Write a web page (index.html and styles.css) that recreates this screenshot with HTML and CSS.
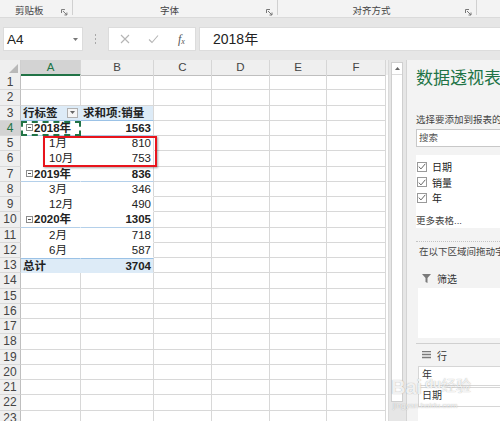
FILE: index.html
```html
<!DOCTYPE html>
<html lang="zh-CN">
<head>
<meta charset="utf-8">
<title>数据透视表</title>
<link rel="stylesheet" href="styles.css">
</head>
<body>
<div class="app">
  <div class="ribbon">
    <div class="grp g1"><span class="glabel">剪贴板</span><svg class="launch" width="7" height="7" viewBox="0 0 7 7"><path d="M0.5 4V0.5H4M2 2L6 6M6 3.5V6H3.5" fill="none" stroke="#777" stroke-width="1"/></svg></div>
    <div class="grp g2"><span class="glabel">字体</span><svg class="launch" width="7" height="7" viewBox="0 0 7 7"><path d="M0.5 4V0.5H4M2 2L6 6M6 3.5V6H3.5" fill="none" stroke="#777" stroke-width="1"/></svg></div>
    <div class="grp g3"><span class="glabel">对齐方式</span><svg class="launch" width="7" height="7" viewBox="0 0 7 7"><path d="M0.5 4V0.5H4M2 2L6 6M6 3.5V6H3.5" fill="none" stroke="#777" stroke-width="1"/></svg></div>
  </div>

  <div class="fbar">
    <div class="namebox"><span>A4</span><svg width="5" height="3" viewBox="0 0 5 3"><path d="M0 0H5L2.5 3Z" fill="#777"/></svg></div>
    <div class="dots"><i></i><i></i><i></i></div>
    <div class="fbtns">
      <svg width="10" height="10" viewBox="0 0 10 10"><path d="M1 1L9 9M9 1L1 9" stroke="#b5b5b5" stroke-width="1.1"/></svg>
      <svg width="11" height="10" viewBox="0 0 11 10"><path d="M1 5.5L4 8.5L10 1.5" fill="none" stroke="#b5b5b5" stroke-width="1.1"/></svg>
      <span class="fx">f<sub>x</sub></span>
    </div>
    <div class="finput">2018年</div>
  </div>

  <div class="main">
    <div class="sheet">
      <div class="row hdr">
        <div class="corner"><svg width="9" height="9" viewBox="0 0 9 9"><path d="M9 0V9H0Z" fill="#b9b9b9"/></svg></div>
        <div class="ch sel">A</div><div class="ch">B</div><div class="ch">C</div><div class="ch">D</div><div class="ch">E</div><div class="ch">F</div>
      </div>
      <div class="row"><div class="rh">1</div><div class="c"></div><div class="c"></div><div class="c"></div><div class="c"></div><div class="c"></div><div class="c"></div></div>
      <div class="row"><div class="rh">2</div><div class="c"></div><div class="c"></div><div class="c"></div><div class="c"></div><div class="c"></div><div class="c"></div></div>
      <div class="row"><div class="rh">3</div><div class="c pv ph pa b">行标签<span class="ddbtn"><svg width="5" height="3" viewBox="0 0 5 3"><path d="M0 0H5L2.5 3Z" fill="#666"/></svg></span></div><div class="c pv ph pb b num-l">求和项:销量</div><div class="c"></div><div class="c"></div><div class="c"></div><div class="c"></div></div>
      <div class="row"><div class="rh rsel">4</div><div class="c pv py pa b active"><span class="minus"></span>2018年</div><div class="c pv py pb b num">1563</div><div class="c"></div><div class="c"></div><div class="c"></div><div class="c"></div></div>
      <div class="row"><div class="rh">5</div><div class="c pv pa kid">1月</div><div class="c pv pb num">810</div><div class="c"></div><div class="c"></div><div class="c"></div><div class="c"></div></div>
      <div class="row"><div class="rh">6</div><div class="c pv pa kid">10月</div><div class="c pv pb num">753</div><div class="c"></div><div class="c"></div><div class="c"></div><div class="c"></div></div>
      <div class="row"><div class="rh">7</div><div class="c pv py pa b"><span class="minus"></span>2019年</div><div class="c pv py pb b num">836</div><div class="c"></div><div class="c"></div><div class="c"></div><div class="c"></div></div>
      <div class="row"><div class="rh">8</div><div class="c pv pa kid">3月</div><div class="c pv pb num">346</div><div class="c"></div><div class="c"></div><div class="c"></div><div class="c"></div></div>
      <div class="row"><div class="rh">9</div><div class="c pv pa kid">12月</div><div class="c pv pb num">490</div><div class="c"></div><div class="c"></div><div class="c"></div><div class="c"></div></div>
      <div class="row"><div class="rh">10</div><div class="c pv py pa b"><span class="minus"></span>2020年</div><div class="c pv py pb b num">1305</div><div class="c"></div><div class="c"></div><div class="c"></div><div class="c"></div></div>
      <div class="row"><div class="rh">11</div><div class="c pv pa kid">2月</div><div class="c pv pb num">718</div><div class="c"></div><div class="c"></div><div class="c"></div><div class="c"></div></div>
      <div class="row"><div class="rh">12</div><div class="c pv pa kid">6月</div><div class="c pv pb num">587</div><div class="c"></div><div class="c"></div><div class="c"></div><div class="c"></div></div>
      <div class="row"><div class="rh">13</div><div class="c pv pt pa b">总计</div><div class="c pv pt pb b num">3704</div><div class="c"></div><div class="c"></div><div class="c"></div><div class="c"></div></div>
      <div class="row"><div class="rh">14</div><div class="c"></div><div class="c"></div><div class="c"></div><div class="c"></div><div class="c"></div><div class="c"></div></div>
      <div class="row"><div class="rh">15</div><div class="c"></div><div class="c"></div><div class="c"></div><div class="c"></div><div class="c"></div><div class="c"></div></div>
      <div class="row"><div class="rh">16</div><div class="c"></div><div class="c"></div><div class="c"></div><div class="c"></div><div class="c"></div><div class="c"></div></div>
      <div class="row"><div class="rh">17</div><div class="c"></div><div class="c"></div><div class="c"></div><div class="c"></div><div class="c"></div><div class="c"></div></div>
      <div class="row"><div class="rh">18</div><div class="c"></div><div class="c"></div><div class="c"></div><div class="c"></div><div class="c"></div><div class="c"></div></div>
      <div class="row"><div class="rh">19</div><div class="c"></div><div class="c"></div><div class="c"></div><div class="c"></div><div class="c"></div><div class="c"></div></div>
      <div class="row"><div class="rh">20</div><div class="c"></div><div class="c"></div><div class="c"></div><div class="c"></div><div class="c"></div><div class="c"></div></div>
      <div class="row"><div class="rh">21</div><div class="c"></div><div class="c"></div><div class="c"></div><div class="c"></div><div class="c"></div><div class="c"></div></div>
      <div class="row"><div class="rh">22</div><div class="c"></div><div class="c"></div><div class="c"></div><div class="c"></div><div class="c"></div><div class="c"></div></div>
      <div class="row"><div class="rh">23</div><div class="c"></div><div class="c"></div><div class="c"></div><div class="c"></div><div class="c"></div><div class="c"></div></div>
      <div class="redbox"></div>
    </div>

    <div class="gutter">
      <div class="vscroll"><div class="up"><svg width="5" height="3" viewBox="0 0 5 3"><path d="M0 3H5L2.5 0Z" fill="#666"/></svg></div></div>
    </div>

    <aside class="panel">
      <div class="p-title">数据透视表字段</div>
      <div class="p-sub">选择要添加到报表的字段:</div>
      <div class="p-search">搜索</div>
      <div class="p-fields">
        <div class="fld"><span class="cb"><svg width="8" height="7" viewBox="0 0 8 7"><path d="M0.7 3.6L3 5.9L7.3 0.8" fill="none" stroke="#666" stroke-width="1"/></svg></span>日期</div>
        <div class="fld"><span class="cb"><svg width="8" height="7" viewBox="0 0 8 7"><path d="M0.7 3.6L3 5.9L7.3 0.8" fill="none" stroke="#666" stroke-width="1"/></svg></span>销量</div>
        <div class="fld"><span class="cb"><svg width="8" height="7" viewBox="0 0 8 7"><path d="M0.7 3.6L3 5.9L7.3 0.8" fill="none" stroke="#666" stroke-width="1"/></svg></span>年</div>
        <div class="more">更多表格...</div>
      </div>
      <div class="p-dotted"></div>
      <div class="p-hint">在以下区域间拖动字段:</div>
      <div class="area-h"><svg width="9" height="9" viewBox="0 0 9 9"><path d="M0 0H9L5.5 4V9L3.5 8V4Z" fill="#7a7a7a"/></svg><span>筛选</span></div>
      <div class="area-box"></div>
      <div class="p-line"></div>
      <div class="area-h"><svg width="9" height="8" viewBox="0 0 9 8"><path d="M0 0.5H9M0 3.5H9M0 6.5H9" stroke="#7a7a7a" stroke-width="1.4"/></svg><span>行</span></div>
      <div class="area-box items"><div class="item">年</div><div class="item">日期</div></div>
    </aside>
  </div>

  <div class="watermark"><span class="wm-bai">Bai</span><span class="wm-paw">du</span><span class="wm-jy">经验</span><span class="wm-url">jingyan.baidu.com</span></div>
</div>
</body>
</html>
```

FILE: styles.css
```css
html, body {
  margin: 0;
  padding: 0;
}
body {
  width: 500px;
  height: 421px;
  overflow: hidden;
  background: #e6e6e6;
  font-family: "Liberation Sans", "Noto Sans CJK SC", sans-serif;
  color: #222;
}
.app {
  position: relative;
  width: 500px;
  height: 421px;
  overflow: hidden;
}

/* ribbon */
.ribbon {
  height: 18px;
  background: #f3f3f3;
  border-bottom: 1px solid #dadada;
  box-sizing: border-box;
  display: flex;
}
.grp {
  display: flex;
  align-items: flex-start;
  box-sizing: border-box;
  border-right: 1px solid #d0d0d0;
  height: 15px;
}
.g1 { width: 73px; padding-left: 15px; }
.g2 { width: 205px; }
.g3 { width: 199px; }
.g2 .glabel, .g3 .glabel { flex: 1; text-align: center; }
.glabel {
  font-size: 9.5px;
  line-height: 12px;
  margin-top: 5px;
  color: #444;
}
.g1 .glabel { width: 47px; }
.launch { margin-top: 9px; margin-right: 4px; }

/* formula bar */
.fbar {
  height: 42px;
  display: flex;
  align-items: flex-start;
  padding-top: 9px;
  box-sizing: border-box;
}
.namebox {
  margin-left: 3px;
  width: 80px;
  height: 24px;
  background: #fff;
  border: 1px solid #dcdcdc;
  box-sizing: border-box;
  display: flex;
  align-items: center;
  justify-content: space-between;
  padding: 0 4px 0 3px;
  font-size: 13.5px;
}
.dots {
  width: 25px;
  height: 24px;
  display: flex;
  flex-direction: column;
  align-items: center;
  justify-content: center;
  gap: 2px;
}
.dots i {
  display: block;
  width: 1px;
  height: 2px;
  background: #a8a8a8;
}
.fbtns {
  width: 88px;
  height: 24px;
  background: #fff;
  border: 1px solid #dcdcdc;
  box-sizing: border-box;
  display: flex;
  align-items: center;
  padding-left: 11px;
  gap: 18px;
}
.fx {
  font-family: "Liberation Serif", serif;
  font-style: italic;
  font-size: 12px;
  color: #555;
  margin-left: 1px;
}
.fx sub { font-size: 8px; vertical-align: -1px; }
.finput {
  margin-left: 3px;
  flex: 1;
  height: 24px;
  background: #fff;
  border: 1px solid #dcdcdc;
  border-right: 0;
  box-sizing: border-box;
  padding-left: 13px;
  font-size: 14px;
  line-height: 22px;
  color: #222;
}

/* main */
.main {
  display: flex;
  height: 361px;
}
.sheet {
  position: relative;
  width: 389px;
  flex: none;
  background: #fff;
  border-right: 1px solid #dadada;
  box-sizing: border-box;
}
.row {
  display: grid;
  grid-template-columns: 21px 60px 73px 58px 58px 57px 59px;
  height: 15.25px;
}
.row.hdr {
  height: 15px;
  background: #efefef;
}
.corner {
  border-right: 1px solid #cfcfcf;
  border-bottom: 1px solid #bfbfbf;
  box-sizing: border-box;
  display: flex;
  align-items: flex-end;
  justify-content: flex-end;
  padding: 0 2px 2px 0;
}
.ch {
  border-right: 1px solid #d6d6d6;
  border-bottom: 1px solid #bfbfbf;
  box-sizing: border-box;
  text-align: center;
  font-size: 11.5px;
  line-height: 14px;
  color: #444;
}
.ch.sel {
  background: #d3d3d3;
  color: #217346;
  border-bottom: 2px solid #217346;
}
.rh {
  background: #efefef;
  border-right: 1px solid #bfbfbf;
  border-bottom: 1px solid #d9d9d9;
  box-sizing: border-box;
  text-align: center;
  font-size: 12px;
  line-height: 14px;
  color: #444;
}
.rh.rsel {
  background: #d3d3d3;
  color: #217346;
}
.c {
  border-right: 1px solid #d8d8d8;
  border-bottom: 1px solid #d8d8d8;
  box-sizing: border-box;
  font-size: 11.5px;
  line-height: 14px;
  padding: 0 2px;
  white-space: nowrap;
  overflow: hidden;
  display: flex;
  align-items: center;
}
.pv { border-bottom-color: transparent; }
.pv.pa { border-right-color: transparent; }
.ph { background: #ddebf7; border-bottom: 1px solid #9bc2e6; }
.py { border-bottom: 1px solid #b4d0ea; }
.pt { background: #ddebf7; border-top: 1px solid #9bc2e6; }
.b { font-weight: bold; }
.num { justify-content: flex-end; padding-right: 2px; }
.kid { padding-left: 28px; }
.active {
  outline: 2px dashed #217346;
  outline-offset: -2px;
  padding-left: 5px;
}
.py.pa { padding-left: 5px; }
.minus {
  width: 7px;
  height: 7px;
  border: 1px solid #8c8c8c;
  box-sizing: border-box;
  margin-right: 1px;
  position: relative;
  flex: none;
}
.minus::after {
  content: "";
  position: absolute;
  left: 1px;
  right: 1px;
  top: 2px;
  height: 1px;
  background: #555;
}
.ddbtn {
  margin-left: 9px;
  width: 11px;
  height: 10px;
  border: 1px solid #b0b0b0;
  background: #f5f5f5;
  box-sizing: border-box;
  display: flex;
  align-items: center;
  justify-content: center;
}
.redbox {
  position: absolute;
  left: 43px;
  top: 76px;
  width: 114px;
  height: 31px;
  border: 2.5px solid #e8141c;
  box-sizing: border-box;
  box-shadow: 1px 1px 2px rgba(0,0,0,0.35);
}

/* gutter / scrollbar */
.gutter {
  width: 17px;
  flex: none;
  padding: 2px 3px 0 2px;
  box-sizing: border-box;
}
.vscroll {
  height: 340px;
  background: #fff;
  border: 1px solid #cfcfcf;
  box-sizing: border-box;
}
.up {
  height: 11px;
  border-bottom: 1px solid #dcdcdc;
  display: flex;
  align-items: center;
  justify-content: center;
}

/* panel */
.panel {
  flex: none;
  width: 200px;
  background: #f3f3f3;
  border-left: 1px solid #d4d4d4;
  box-sizing: border-box;
  padding-left: 9px;
  white-space: nowrap;
}
.p-title {
  margin-top: 9px;
  font-size: 17px;
  line-height: 20px;
  color: #217346;
}
.p-sub {
  margin-top: 25px;
  font-size: 9.5px;
  line-height: 12px;
  color: #444;
}
.p-search {
  margin-top: 3px;
  height: 18px;
  background: #fff;
  border: 1px solid #c8c8c8;
  box-sizing: border-box;
  font-size: 9.5px;
  line-height: 16px;
  padding-left: 2px;
  color: #555;
}
.p-fields {
  margin-top: 8px;
  height: 73px;
  background: #fff;
  box-sizing: border-box;
  padding-top: 4px;
}
.fld {
  height: 15.5px;
  display: flex;
  align-items: center;
  font-size: 10px;
  color: #222;
}
.cb {
  width: 10px;
  height: 10px;
  border: 1px solid #9a9a9a;
  box-sizing: border-box;
  background: #fff;
  display: flex;
  align-items: center;
  justify-content: center;
  margin: 0 5px 0 1px;
}
.more {
  margin-top: 8px;
  font-size: 9.5px;
  line-height: 14px;
  color: #444;
}
.p-dotted {
  margin-top: 13px;
  border-top: 1px dotted #c4c4c4;
}
.p-hint {
  margin-top: 4px;
  padding-left: 3px;
  font-size: 9.5px;
  line-height: 12px;
  color: #444;
}
.area-h {
  margin-top: 13px;
  height: 14px;
  display: flex;
  align-items: center;
  padding-left: 6px;
  gap: 6px;
  font-size: 10px;
  color: #333;
}
.area-box {
  margin-top: 3px;
  margin-left: 2px;
  height: 50px;
  background: #fff;
}
.p-line {
  margin-top: 5px;
  border-top: 1px solid #d0d0d0;
}
.panel .area-h + .area-box.items { margin-top: 4px; }
.p-line + .area-h { margin-top: 4px; }
.area-box.items {
  background: #fff;
  height: 60px;
}
.item {
  height: 20px;
  border: 1px solid #d6d6d6;
  box-sizing: border-box;
  font-size: 10px;
  line-height: 14px;
  padding: 1px 0 0 3px;
  color: #333;
}
.item + .item { margin-top: 1px; }

/* watermark */
.watermark {
  position: absolute;
  left: 389px;
  top: 372px;
  width: 111px;
  height: 45px;
  color: rgba(255,255,255,0.85);
  text-shadow: 0 0 1px rgba(90,90,90,0.55);
  pointer-events: none;
}
.wm-bai {
  position: absolute;
  left: 2px;
  top: 4px;
  font-size: 20px;
  font-weight: bold;
  font-family: "Liberation Sans", sans-serif;
}
.wm-paw {
  position: absolute;
  left: 36px;
  top: 4px;
  font-size: 13px;
  font-weight: bold;
}
.wm-jy {
  position: absolute;
  left: 52px;
  top: 2px;
  font-size: 15px;
}
.wm-url {
  position: absolute;
  left: 4px;
  top: 29px;
  font-size: 8px;
}
```
